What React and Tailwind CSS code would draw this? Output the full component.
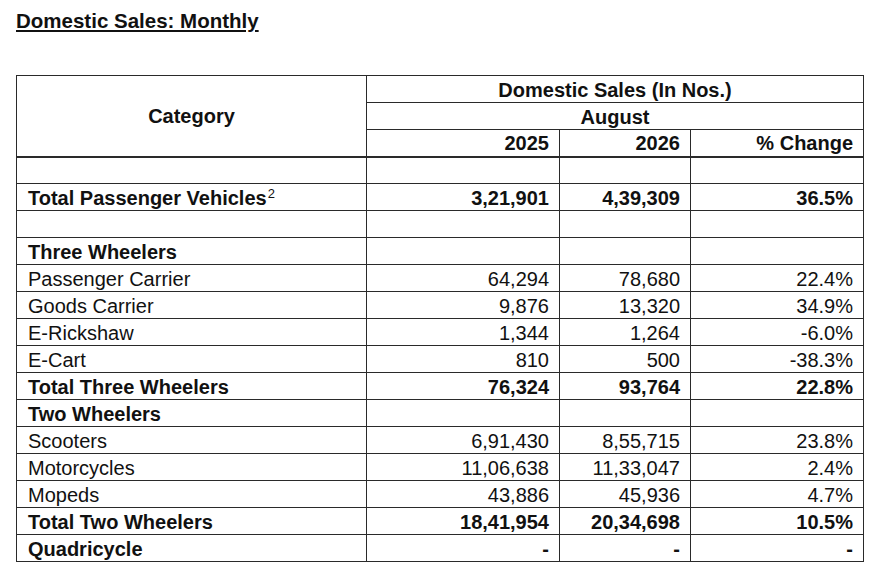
import React from 'react';

const rows = [
  { type: 'blank' },
  { label: 'Total Passenger Vehicles', sup: '2', bold: true, values: ['3,21,901', '4,39,309', '36.5%'] },
  { type: 'blank' },
  { label: 'Three Wheelers', bold: true, values: ['', '', ''] },
  { label: 'Passenger Carrier', values: ['64,294', '78,680', '22.4%'] },
  { label: 'Goods Carrier', values: ['9,876', '13,320', '34.9%'] },
  { label: 'E-Rickshaw', values: ['1,344', '1,264', '-6.0%'] },
  { label: 'E-Cart', values: ['810', '500', '-38.3%'] },
  { label: 'Total Three Wheelers', bold: true, values: ['76,324', '93,764', '22.8%'] },
  { label: 'Two Wheelers', bold: true, values: ['', '', ''] },
  { label: 'Scooters', values: ['6,91,430', '8,55,715', '23.8%'] },
  { label: 'Motorcycles', values: ['11,06,638', '11,33,047', '2.4%'] },
  { label: 'Mopeds', values: ['43,886', '45,936', '4.7%'] },
  { label: 'Total Two Wheelers', bold: true, values: ['18,41,954', '20,34,698', '10.5%'] },
  { label: 'Quadricycle', bold: true, values: ['-', '-', '-'] },
];

const cell = 'border border-[#2a2a2a] h-[27px] p-0 align-middle leading-[23px] pt-[2px]';

export default function App() {
  return (
    <div
      className="bg-white min-h-[567px] w-[895px] pl-4 pt-[9px] text-[#111]"
      style={{ fontFamily: '"Liberation Sans", Arial, sans-serif' }}
    >
      <h1 className="text-[20.5px] leading-[23px] font-bold underline underline-offset-[2px] decoration-[1.5px]">
        Domestic Sales: Monthly
      </h1>

      <table className="mt-[43px] border-collapse table-fixed w-[847px] text-[20px]">
        <colgroup>
          <col className="w-[350px]" />
          <col className="w-[193px]" />
          <col className="w-[131px]" />
          <col className="w-[173px]" />
        </colgroup>
        <thead>
          <tr>
            <th rowSpan={3} className={`${cell} border-b-2 font-bold text-center`}>
              Category
            </th>
            <th colSpan={3} className={`${cell} font-bold text-center`}>
              Domestic Sales (In Nos.)
            </th>
          </tr>
          <tr>
            <th colSpan={3} className={`${cell} font-bold text-center`}>
              August
            </th>
          </tr>
          <tr>
            <th className={`${cell} border-b-2 font-bold text-right pr-[10px]`}>2025</th>
            <th className={`${cell} border-b-2 font-bold text-right pr-[10px]`}>2026</th>
            <th className={`${cell} border-b-2 font-bold text-right pr-[10px]`}>% Change</th>
          </tr>
        </thead>
        <tbody>
          {rows.map((r, i) =>
            r.type === 'blank' ? (
              <tr key={i}>
                <td className={cell}></td>
                <td className={cell}></td>
                <td className={cell}></td>
                <td className={cell}></td>
              </tr>
            ) : (
              <tr key={i} className={r.bold ? 'font-bold' : 'font-normal'}>
                <td className={`${cell} pl-[11px] text-left`}>
                  {r.label}
                  {r.sup && (
                    <sup className="text-[13px] font-normal relative -top-[7px] ml-[1px]">{r.sup}</sup>
                  )}
                </td>
                {r.values.map((v, j) => (
                  <td key={j} className={`${cell} text-right pr-[10px]`}>
                    {v}
                  </td>
                ))}
              </tr>
            )
          )}
        </tbody>
      </table>
    </div>
  );
}
